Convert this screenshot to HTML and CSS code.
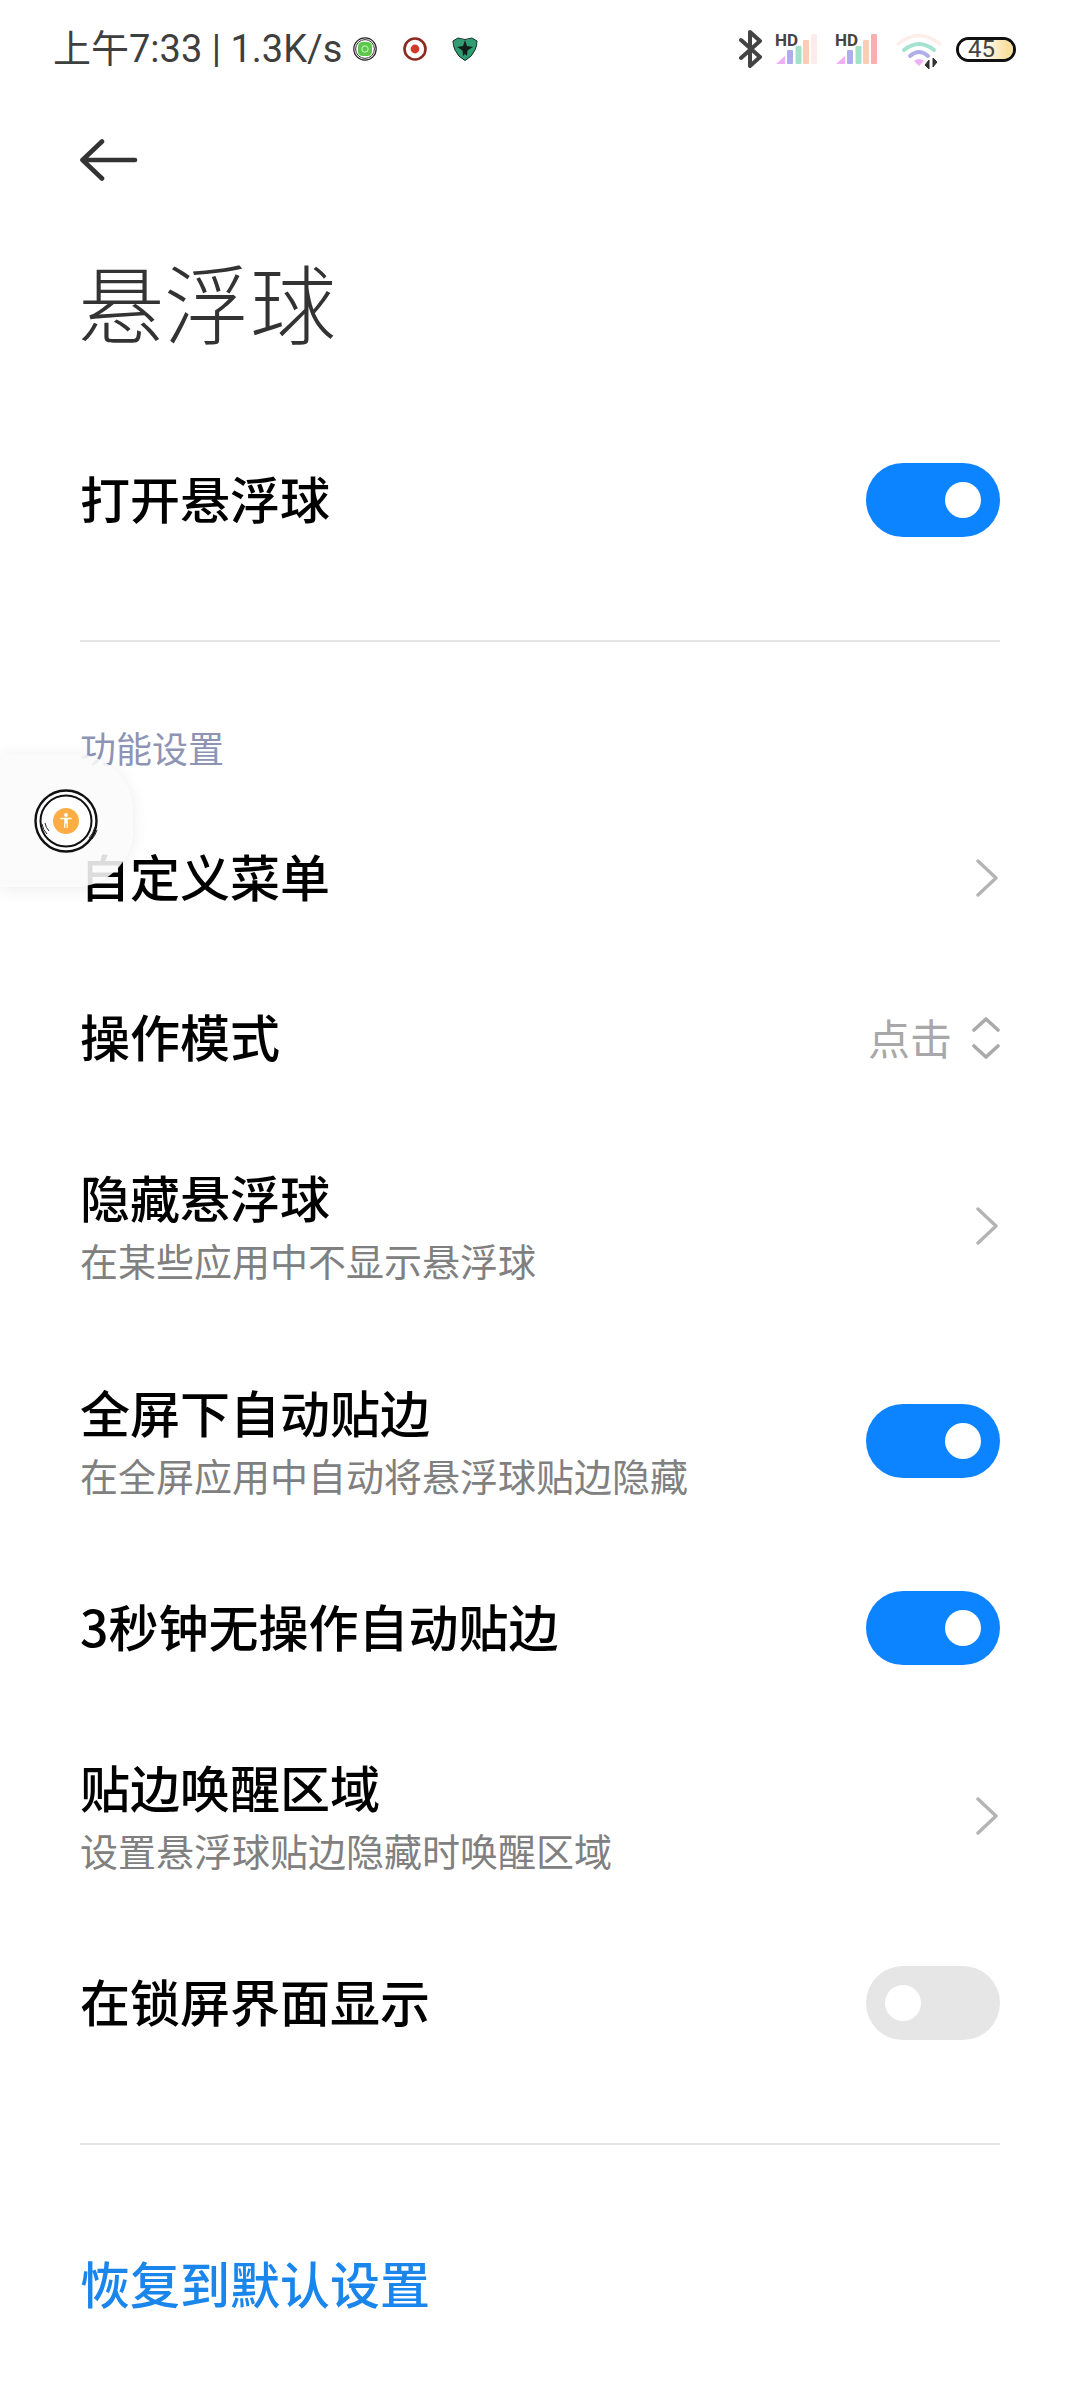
FILE: index.html
```html
<!DOCTYPE html>
<html lang="zh-CN">
<head>
<meta charset="utf-8">
<title>悬浮球</title>
<link rel="stylesheet" href="styles.css">
</head>
<body>
<div class="page">
  <header class="status">
    <div class="status-left">
      <span class="status-text">上午7:33 | 1.3K/s</span>
      <svg class="app-icon first" viewBox="0 0 26 26" width="26" height="26"><circle cx="13" cy="13" r="11.2" fill="#fff" stroke="#222" stroke-width="1.2"/><circle cx="13" cy="13" r="9.4" fill="#fff" stroke="#333" stroke-width="1"/><rect x="6" y="6" width="14" height="14" rx="4.5" fill="#5cc84a"/><circle cx="13" cy="13" r="3.2" fill="none" stroke="#d4f2cc" stroke-width="1"/></svg>
      <svg class="app-icon" viewBox="0 0 26 26" width="26" height="26"><circle cx="13" cy="13" r="10.5" fill="#fff" stroke="#8c2a22" stroke-width="2.6"/><circle cx="13" cy="13" r="4.4" fill="#d23a2a"/></svg>
      <svg class="app-icon" viewBox="0 0 26 26" width="26" height="26"><path d="M1 5 L6 2 Q13 5 20 2 L25 5 Q25 10 23 14 Q20 21 13 24.5 Q6 21 3 14 Q1 10 1 5Z" fill="#2f9c72" stroke="#12302a" stroke-width="1"/><path d="M13 4 L15 10 L21 11 L15.5 14.5 L15 20 L13 18 L11 20 L10.5 14.5 L5 11 L11 10Z" fill="#12201c"/></svg>
    </div>
    <div class="status-right">
      <svg class="bt" viewBox="0 0 26 38" width="26" height="38"><path d="M3 10 L22 27 L12 36 V2 L22 11 L3 28" fill="none" stroke="#444" stroke-width="4" stroke-linejoin="round" stroke-linecap="round"/></svg>
      <div class="signal">
        <span class="hd">HD</span>
        <svg viewBox="0 0 42 30" width="42" height="30"><path d="M0 30 L9 22 V30Z" fill="#eeb0f5"/><rect x="11" y="16" width="6" height="14" rx="1" fill="#b0aeea"/><rect x="19.5" y="12" width="6" height="18" rx="1" fill="#a2e2cd"/><rect x="27" y="6" width="6" height="24" rx="1" fill="#fbcdb4"/><rect x="35" y="0" width="6" height="30" rx="1" fill="#fdeceb"/></svg>
      </div>
      <div class="signal second">
        <span class="hd">HD</span>
        <svg viewBox="0 0 42 30" width="42" height="30"><path d="M0 30 L9 22 V30Z" fill="#eeb0f5"/><rect x="11" y="16" width="6" height="14" rx="1" fill="#b0aeea"/><rect x="19.5" y="12" width="6" height="18" rx="1" fill="#a2e2cd"/><rect x="27" y="6" width="6" height="24" rx="1" fill="#fbcdb4"/><rect x="35" y="0" width="6" height="30" rx="1" fill="#f9aeb0"/></svg>
      </div>
      <svg class="wifi" viewBox="0 0 46 36" width="46" height="36"><path d="M2 11 Q23 -6 44 11" fill="none" stroke="#fdeeea" stroke-width="3.5" stroke-linecap="round"/><path d="M8 17 Q23 5 38 17" fill="none" stroke="#a4e3cf" stroke-width="4" stroke-linecap="round"/><path d="M14 23 Q23 15 32 23" fill="none" stroke="#b0aeea" stroke-width="4" stroke-linecap="round"/><path d="M18 28 Q23 24 28 28 L23 33Z" fill="#efb0f5"/><path d="M33 36 V27 L29 32Z M37 25 V34 L41 29Z" fill="#333" stroke="#333" stroke-width="1"/></svg>
      <div class="battery"><span class="battery-fill"></span><span class="battery-num">45</span></div>
    </div>
  </header>

  <svg class="back" viewBox="0 0 58 42" width="58" height="42"><path d="M2.5 21 H55 M22 2.5 L2.5 21 L22 39.5" fill="none" stroke="#333" stroke-width="4.6" stroke-linecap="round" stroke-linejoin="round"/></svg>

  <h1 class="title">悬浮球</h1>

  <section class="group top">
    <div class="row"><div class="row-text"><div class="row-title">打开悬浮球</div></div><span class="toggle on"></span></div>
  </section>

  <section class="group settings">
    <div class="group-label">功能设置</div>
    <div class="row"><div class="row-text"><div class="row-title">自定义菜单</div></div><svg class="chev" viewBox="0 0 22 38" width="22" height="38"><path d="M2 2 L20 19 L2 36" fill="none" stroke="#b4b4b4" stroke-width="3.4" stroke-linecap="round" stroke-linejoin="round"/></svg></div>
    <div class="row"><div class="row-text"><div class="row-title">操作模式</div></div><div class="row-value"><span class="value-text">点击</span><svg class="updown" viewBox="0 0 28 42" width="28" height="42"><path d="M2 13 L14 2 L26 13 M2 29 L14 40 L26 29" fill="none" stroke="#aaa" stroke-width="3.6" stroke-linecap="round" stroke-linejoin="round"/></svg></div></div>
    <div class="row tall"><div class="row-text"><div class="row-title">隐藏悬浮球</div><div class="row-sub">在某些应用中不显示悬浮球</div></div><svg class="chev" viewBox="0 0 22 38" width="22" height="38"><path d="M2 2 L20 19 L2 36" fill="none" stroke="#b4b4b4" stroke-width="3.4" stroke-linecap="round" stroke-linejoin="round"/></svg></div>
    <div class="row tall"><div class="row-text"><div class="row-title">全屏下自动贴边</div><div class="row-sub">在全屏应用中自动将悬浮球贴边隐藏</div></div><span class="toggle on"></span></div>
    <div class="row"><div class="row-text"><div class="row-title">3秒钟无操作自动贴边</div></div><span class="toggle on"></span></div>
    <div class="row tall"><div class="row-text"><div class="row-title">贴边唤醒区域</div><div class="row-sub">设置悬浮球贴边隐藏时唤醒区域</div></div><svg class="chev" viewBox="0 0 22 38" width="22" height="38"><path d="M2 2 L20 19 L2 36" fill="none" stroke="#b4b4b4" stroke-width="3.4" stroke-linecap="round" stroke-linejoin="round"/></svg></div>
    <div class="row"><div class="row-text"><div class="row-title">在锁屏界面显示</div></div><span class="toggle off"></span></div>
  </section>

  <section class="group bottom">
    <div class="reset">恢复到默认设置</div>
  </section>

  <div class="ball">
    <svg viewBox="0 0 66 66" width="66" height="66"><circle cx="33" cy="33" r="30.5" fill="#fff" stroke="#111" stroke-width="2.4"/><circle cx="33" cy="33" r="25.5" fill="#fff" stroke="#111" stroke-width="2"/><path d="M9 36 Q10 42 14 46 M12 35 Q13 40 16 43 M62 39 Q60 46 56 50 M64 42 Q62 48 59 51" fill="none" stroke="#222" stroke-width="1"/><circle cx="33" cy="33" r="13" fill="#fcae45"/><circle cx="33" cy="27" r="1.9" fill="#fff"/><path d="M28 30.5 H38" stroke="#fff" stroke-width="1.7" fill="none" stroke-linecap="round"/><path d="M31.2 30.5 H34.8 V40 H33.6 V35.5 H32.4 V40 H31.2Z" fill="#fff"/></svg>
  </div>
</div>
</body>
</html>
```

FILE: styles.css
```css
* { box-sizing: border-box; }
html, body { margin: 0; padding: 0; background: #fff; }
body { font-family: "Noto Sans CJK SC", "Noto Sans", sans-serif; }
.page { position: relative; width: 1080px; height: 2400px; overflow: hidden; padding: 0 80px; }

.status { height: 98px; margin: 0 -16px 0 -27px; display: flex; justify-content: space-between; align-items: center; }
.status-left { display: flex; align-items: center; }
.status-text { font-family: "Roboto", "Noto Sans CJK SC", sans-serif; font-size: 38px; color: #3f3f3f; line-height: 1; }
.app-icon { margin-left: 24px; }
.app-icon.first { margin-left: 10px; }
.status-right { display: flex; align-items: center; }
.bt { margin-right: 12px; }
.signal { position: relative; width: 42px; height: 30px; }
.signal.second { margin-left: 18px; }
.signal svg { display: block; }
.hd { position: absolute; left: -1px; top: -2px; font-family: "Roboto", sans-serif; font-weight: 700; font-size: 17px; line-height: 17px; color: #444; }
.wifi { margin-left: 18px; margin-top: 4px; }
.battery { position: relative; margin-left: 14px; width: 60px; height: 25px; border: 3px solid #111; border-radius: 13px; display: flex; align-items: center; padding-left: 9px; }
.battery-fill { position: absolute; inset: 0; border-radius: 10px; background: linear-gradient(90deg, #fff 40%, #fbdf9d 90%); }
.battery-num { position: relative; font-family: "Roboto", sans-serif; font-size: 24px; color: #444; line-height: 19px; }

.back { display: block; margin-top: 41px; }
.title { margin: 70px 0 0 -2px; font-size: 86px; font-weight: 300; line-height: 100px; color: #333; }

.group.top { margin-top: 112px; padding-bottom: 103px; border-bottom: 2px solid #e4e4e4; }
.group.settings { margin-top: 80px; border-bottom: 2px solid #e4e4e4; padding-bottom: 60px; }
.group-label { font-size: 36px; line-height: 50px; color: #8e94b4; margin-bottom: 26px; }
.group.bottom { padding-top: 105px; }

.row { display: flex; align-items: center; justify-content: space-between; height: 160px; }
.group.top .row { height: 74px; }
.row.tall { height: 215px; }
.row-text { margin-bottom: 7px; }
.row.tall .row-text { margin-bottom: 2px; }
.row-title { font-size: 50px; font-weight: 500; line-height: 64px; color: #000; }
.row-sub { margin-top: 7px; font-size: 38px; line-height: 50px; color: #808080; }
.row-value { display: flex; align-items: center; }
.value-text { font-size: 42px; color: #a8a8a8; line-height: 1; margin: 0 20px 2px 0; }
.updown { display: block; }
.chev { display: block; margin-right: 2px; }

.toggle { position: relative; display: block; width: 134px; height: 74px; border-radius: 37px; }
.toggle::after { content: ""; position: absolute; top: 19px; width: 36px; height: 36px; border-radius: 50%; background: #fff; }
.toggle.on { background: #0d84ff; }
.toggle.on::after { right: 19px; }
.toggle.off { background: #e6e6e6; }
.toggle.off::after { left: 19px; }

.reset { font-size: 50px; font-weight: 500; line-height: 64px; color: #1a86ec; }

.ball { position: absolute; left: 0; top: 754px; width: 133px; height: 133px; border-radius: 0 58px 58px 0; background: rgba(250,250,250,0.88); box-shadow: 0 2px 16px rgba(0,0,0,0.08); display: flex; align-items: center; padding-left: 33px; }
```
